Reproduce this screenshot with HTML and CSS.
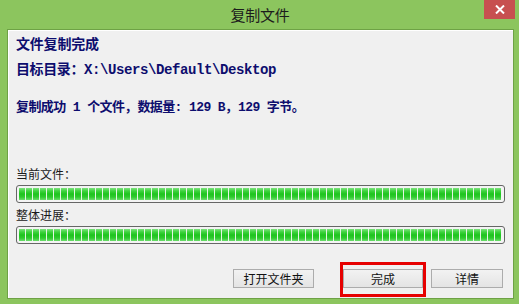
FILE: index.html
```html
<!DOCTYPE html>
<html lang="zh-CN">
<head>
<meta charset="utf-8">
<title>复制文件</title>
<link rel="stylesheet" href="styles.css">
</head>
<body>
<div class="window">
  <div class="titlebar">
    <span></span>
    <span class="title">复制文件</span>
    <span class="close"><svg width="10" height="9" viewBox="0 0 10 9"><path d="M1 0.5 L9 8.5 M9 0.5 L1 8.5" stroke="#fff" stroke-width="2"/></svg></span>
  </div>
  <div class="panel">
    <div class="heading">文件复制完成</div>
    <div class="target">目标目录：X:\Users\Default\Desktop</div>
    <div class="summary">复制成功 1 个文件<span class="cm">，</span>数据量: 129 B<span class="cm">，</span>129 字节。</div>
    <div class="label first">当前文件：</div>
    <div class="bar"><div class="fill"></div></div>
    <div class="label">整体进展：</div>
    <div class="bar"><div class="fill"></div></div>
    <div class="buttons">
      <button class="btn btn-open">打开文件夹</button>
      <div class="hl-wrap">
        <button class="btn btn-done">完成</button>
        <span class="highlight"></span>
      </div>
      <button class="btn btn-detail">详情</button>
    </div>
  </div>
</div>
</body>
</html>
```
FILE: styles.css
```css
html, body {
  margin: 0;
  padding: 0;
}
body {
  width: 519px;
  height: 304px;
  overflow: hidden;
  font-family: "Noto Sans CJK SC", sans-serif;
}
.window {
  width: 519px;
  height: 304px;
  background: #8cc55e;
  display: flex;
  flex-direction: column;
}
.titlebar {
  height: 29px;
  display: grid;
  grid-template-columns: 1fr auto 1fr;
  align-items: start;
}
.title {
  font-size: 15px;
  line-height: 29px;
  color: #1c1c1c;
  letter-spacing: -0.3px;
  margin-left: 1px;
}
.close {
  justify-self: end;
  width: 31px;
  height: 19px;
  margin-right: 4px;
  background: #c75050;
  display: flex;
  align-items: center;
  justify-content: center;
}
.panel {
  box-sizing: border-box;
  width: 507px;
  height: 270px;
  margin-left: 7px;
  background: #f0f0f0;
  border: 1px solid #6ea245;
  box-shadow: inset 1px 1px 0 #ffffff;
  padding: 6px 8px 0 8px;
  display: flex;
  flex-direction: column;
}
.heading, .target, .summary {
  font-family: "Liberation Mono", "Noto Sans CJK SC", monospace;
  font-weight: bold;
  color: #0d0d6e;
  height: 18px;
  line-height: 18px;
  white-space: nowrap;
}
.heading {
  font-size: 14px;
  letter-spacing: -0.2px;
}
.target {
  font-size: 14px;
  letter-spacing: -0.4px;
  margin-top: 7px;
}
.summary {
  font-size: 13px;
  letter-spacing: -0.6px;
  margin-top: 20px;
}
.cm {
  letter-spacing: -6px;
  margin-right: 6px;
}
.label {
  font-size: 12px;
  height: 16px;
  line-height: 16px;
  color: #1a1a1a;
  margin-top: 4px;
}
.label.first {
  margin-top: 49px;
}
.bar {
  box-sizing: border-box;
  width: 489px;
  height: 18px;
  margin-top: 3px;
  border: 1px solid #666;
  border-radius: 3px;
  background: #f4f4f4;
  padding: 2px 3px 2px 2px;
}
.bar + .label {
  margin-top: 4px;
}
.bar:last-of-type {
  margin-top: 4px;
}
.fill {
  height: 100%;
  background:
    repeating-linear-gradient(to right, transparent 0 6px, #e6f5e6 6px 7px),
    linear-gradient(to bottom, #7fe27f 0%, #3fd33f 25%, #1ec41e 50%, #2fcb2f 75%, #6ddc6d 100%);
}
.buttons {
  display: flex;
  justify-content: flex-end;
  padding-right: 2px;
  margin-top: 25px;
}
.btn {
  box-sizing: border-box;
  height: 19px;
  padding: 0;
  border: 1px solid #acacac;
  background: linear-gradient(to bottom, #f2f2f2, #e4e4e4);
  font-family: "Noto Sans CJK SC", sans-serif;
  font-size: 12px;
  line-height: 17px;
  color: #111;
}
.btn-open { width: 81px; }
.btn-done { width: 80px; display: block; }
.btn-detail { width: 72px; }
.hl-wrap {
  position: relative;
  margin: 0 8px 0 29px;
}
.highlight {
  position: absolute;
  left: -3px;
  top: -7px;
  width: 86px;
  height: 35px;
  box-sizing: border-box;
  border: 3px solid #e60000;
}
```
